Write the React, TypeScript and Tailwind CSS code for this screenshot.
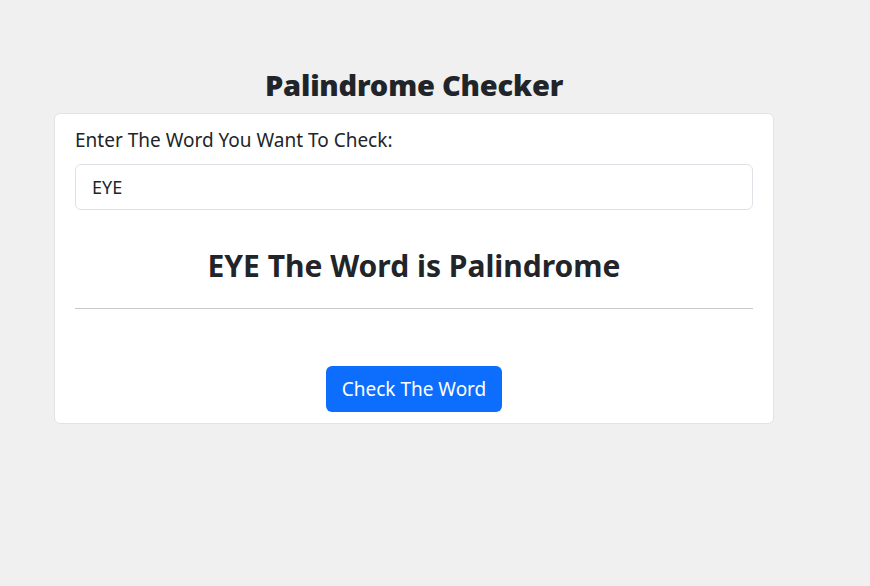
import { useState } from "react";

export default function App() {
  const [word, setWord] = useState("EYE");
  const clean = word.toLowerCase();
  const isPalindrome = clean.length > 0 && clean === clean.split("").reverse().join("");

  return (
    <div className="min-h-[586px] bg-[#f0f0f0] font-['Noto_Sans',sans-serif] text-[#212529]">
      <div className="ml-[54px] w-[720px] pt-[66px]">
        <h1 className="text-center text-[29px] font-black leading-[38px] tracking-[-0.2px]">
          Palindrome Checker
        </h1>
        <div className="mt-[9px] rounded-[6px] border border-[#e2e3e5] bg-white px-[20px] pt-[12px] pb-[11px]">
          <label className="block text-[19px] leading-[28px]" htmlFor="word">
            Enter The Word You Want To Check:
          </label>
          <input
            id="word"
            value={word}
            onChange={(e) => setWord(e.target.value)}
            className="mt-[10px] block h-[46px] w-full rounded-[6px] border border-[#dee2e6] px-[16px] text-[18px] outline-none"
          />
          <h2 className="mt-[37px] text-center text-[30px] font-bold leading-[38px]">
            {word} The Word is {isPalindrome ? "Palindrome" : "Not Palindrome"}
          </h2>
          <hr className="mt-[23px] border-t border-[#c8c8c8]" />
          <div className="mt-[57px] flex justify-center">
            <button className="h-[46px] rounded-[6px] bg-[#0d6efd] px-[16px] text-[19px] text-white">
              Check The Word
            </button>
          </div>
        </div>
      </div>
    </div>
  );
}
